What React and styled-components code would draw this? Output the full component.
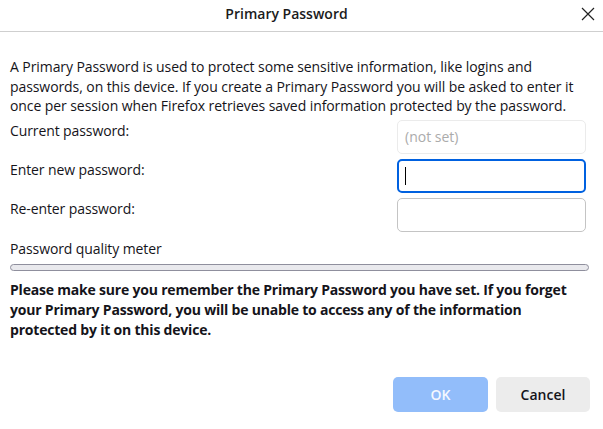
import React from 'react';
import styled, { createGlobalStyle } from 'styled-components';

const GlobalStyle = createGlobalStyle`
  html, body {
    margin: 0;
    padding: 0;
    background: #fff;
  }
  body {
    font-family: "Open Sans", "Noto Sans", sans-serif;
    color: #15141a;
  }
`;

const Dialog = styled.div`
  width: 603px;
  height: 429px;
  display: flex;
  flex-direction: column;
  background: #fff;
`;

const TitleBar = styled.header`
  height: 32px;
  border-bottom: 1px solid #cfcfcf;
  display: grid;
  grid-template-columns: 1fr 30px;
  align-items: center;
  box-sizing: border-box;
  padding-bottom: 4px;
`;

const Title = styled.h1`
  margin: 0;
  text-align: center;
  font-size: 14px;
  font-weight: 600;
  color: #1b1b1b;
`;

const CloseButton = styled.button`
  border: none;
  background: none;
  padding: 0;
  display: flex;
  align-items: center;
  justify-content: center;
  color: #222;
  cursor: pointer;
`;

const Content = styled.main`
  padding: 25px 10px 0;
  display: flex;
  flex-direction: column;
`;

const Intro = styled.p`
  margin: 0;
  font-size: 14px;
  line-height: 19.5px;
  letter-spacing: -0.08px;
`;

const Form = styled.div`
  margin-top: 4px;
  display: grid;
  grid-template-columns: 1fr 189px;
  row-gap: 5px;
  padding-right: 7px;
`;

const Label = styled.label`
  font-size: 14px;
  padding-top: 1px;
  letter-spacing: -0.1px;
`;

const Input = styled.div`
  height: 34px;
  box-sizing: border-box;
  border-radius: 5px;
  border: ${p => (p.$focused ? '2px solid #0061e0' : `1px solid ${p.$disabled ? '#ebebeb' : '#c4c4c4'}`)};
  background: #fff;
  display: flex;
  align-items: center;
  padding: 0 ${p => (p.$focused ? '6px' : '7px')};
  font-size: 14px;
  color: #ababab;
`;

const Caret = styled.span`
  width: 1px;
  height: 18px;
  background: #000;
`;

const MeterLabel = styled.div`
  margin-top: 7px;
  font-size: 14px;
  letter-spacing: -0.1px;
`;

const Meter = styled.div`
  margin-top: 6px;
  margin-right: 4px;
  height: 7px;
  box-sizing: border-box;
  border: 1px solid #8f8f9d;
  border-radius: 4px;
  background: #e9e9ed;
`;

const Warning = styled.p`
  margin: 9px 0 0;
  font-size: 14px;
  font-weight: 700;
  line-height: 20px;
  letter-spacing: -0.2px;
`;

const Footer = styled.footer`
  margin-top: auto;
  display: flex;
  justify-content: flex-end;
  gap: 8px;
  padding: 0 13px 17px 0;
`;

const Button = styled.button`
  width: ${p => (p.$primary ? '95px' : '94px')};
  height: 35px;
  border: none;
  border-radius: 5px;
  font-family: inherit;
  font-size: 14px;
  font-weight: 600;
  background: ${p => (p.$primary ? '#92bdfa' : '#ececec')};
  color: ${p => (p.$primary ? '#f4f8ff' : '#15141a')};
`;

export default function App() {
  return (
    <>
      <GlobalStyle />
      <Dialog>
        <TitleBar>
          <Title>Primary Password</Title>
          <CloseButton aria-label="Close">
            <svg width="14" height="14" viewBox="0 0 14 14">
              <path d="M1 1 L13 13 M13 1 L1 13" stroke="#222" strokeWidth="1.2" fill="none" />
            </svg>
          </CloseButton>
        </TitleBar>
        <Content>
          <Intro>
            A Primary Password is used to protect some sensitive information, like logins and<br />
            passwords, on this device. If you create a Primary Password you will be asked to enter it<br />
            once per session when Firefox retrieves saved information protected by the password.
          </Intro>
          <Form>
            <Label>Current password:</Label>
            <Input $disabled>(not set)</Input>
            <Label>Enter new password:</Label>
            <Input $focused><Caret /></Input>
            <Label>Re-enter password:</Label>
            <Input />
          </Form>
          <MeterLabel>Password quality meter</MeterLabel>
          <Meter />
          <Warning>
            Please make sure you remember the Primary Password you have set. If you forget<br />
            your Primary Password, you will be unable to access any of the information<br />
            protected by it on this device.
          </Warning>
        </Content>
        <Footer>
          <Button $primary disabled>OK</Button>
          <Button>Cancel</Button>
        </Footer>
      </Dialog>
    </>
  );
}
